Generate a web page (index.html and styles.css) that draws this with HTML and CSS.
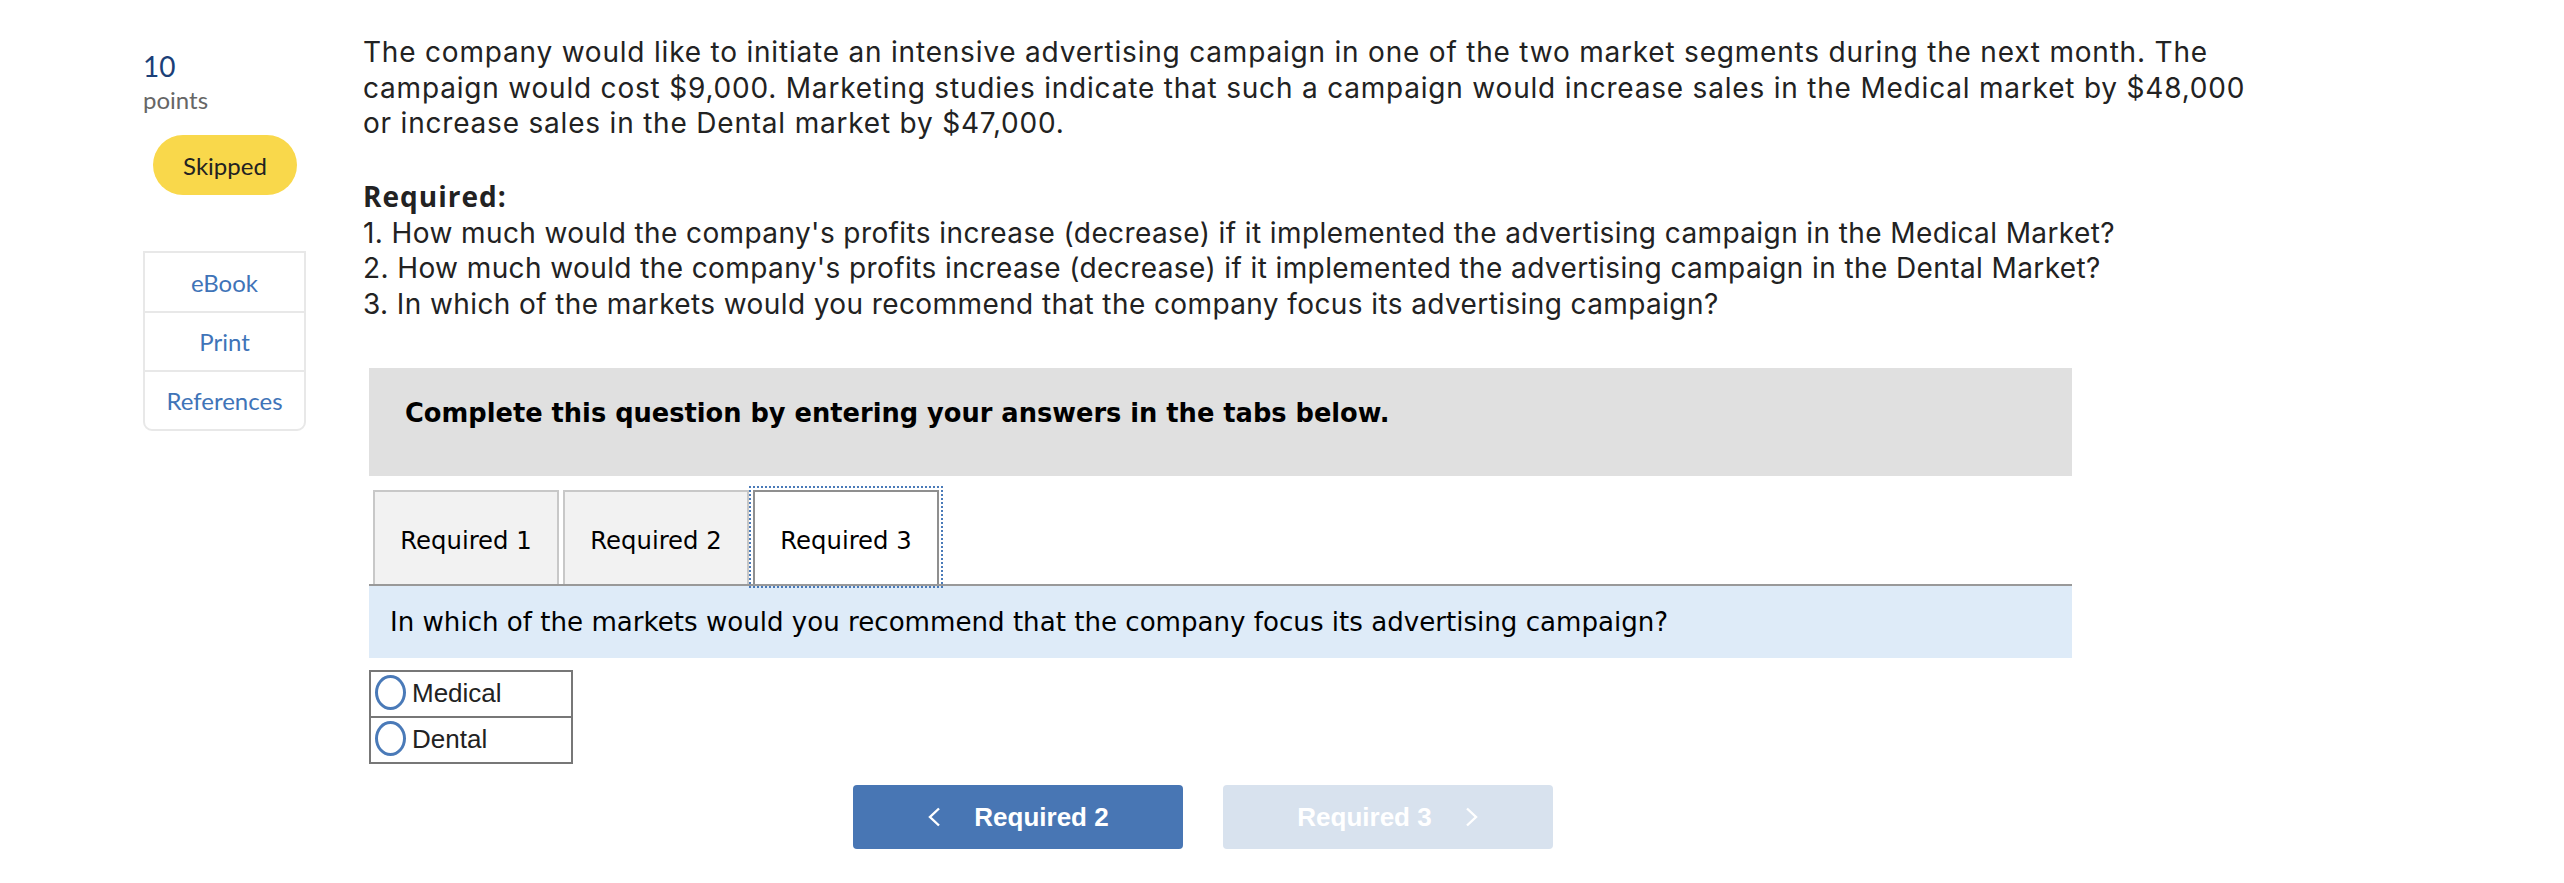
FILE: index.html
```html
<!DOCTYPE html>
<html lang="en">
<head>
<meta charset="utf-8">
<title>Question</title>
<link rel="stylesheet" href="styles.css">
</head>
<body>
<div class="page">
  <aside class="side">
    <div class="num">10</div>
    <div class="pts">points</div>
    <div class="skipped">Skipped</div>
    <ul class="tools">
      <li>eBook</li>
      <li>Print</li>
      <li>References</li>
    </ul>
  </aside>
  <main class="main">
    <p class="intro">The company would like to initiate an intensive advertising campaign in one of the two market segments during the next month. The<br>campaign would cost $9,000. Marketing studies indicate that such a campaign would increase sales in the Medical market by $48,000<br>or increase sales in the Dental market by $47,000.</p>
    <p class="req"><strong>Required:</strong><br>1. How much would the company's profits increase (decrease) if it implemented the advertising campaign in the Medical Market?<br>2. How much would the company's profits increase (decrease) if it implemented the advertising campaign in the Dental Market?<br>3. In which of the markets would you recommend that the company focus its advertising campaign?</p>
    <section class="work">
      <div class="instr">Complete this question by entering your answers in the tabs below.</div>
      <div class="tabs">
        <div class="tab">Required 1</div>
        <div class="tab">Required 2</div>
        <div class="tab active">Required 3</div>
      </div>
      <div class="qbar">In which of the markets would you recommend that the company focus its advertising campaign?</div>
      <table class="choices">
        <tr><td><span class="radio"></span>Medical</td></tr>
        <tr><td><span class="radio"></span>Dental</td></tr>
      </table>
      <div class="nav">
        <button class="btn prev"><svg class="chev" width="14" height="20" viewBox="0 0 14 20"><polyline points="12,1.5 3,10 12,18.5" fill="none" stroke="#fff" stroke-width="2.4"/></svg><span>Required 2</span></button>
        <button class="btn next"><span>Required 3</span><svg class="chev" width="14" height="20" viewBox="0 0 14 20"><polyline points="2,1.5 11,10 2,18.5" fill="none" stroke="#fff" stroke-width="2.4"/></svg></button>
      </div>
    </section>
  </main>
</div>
</body>
</html>
```
FILE: styles.css
```css
html, body {
  margin: 0;
  padding: 0;
  background: #fff;
}
.page {
  display: flex;
  align-items: flex-start;
  padding-left: 143px;
  font-family: Lato, "Liberation Sans", sans-serif;
  color: #222;
}
.side {
  width: 163px;
  flex: none;
  padding-top: 49px;
}
.num {
  font-size: 28px;
  line-height: 34px;
  color: #1b3f78;
}
.pts {
  font-size: 24px;
  line-height: 30px;
  margin-top: 2px;
  color: #666;
}
.skipped {
  margin: 20px 0 0 10px;
  width: 144px;
  height: 60px;
  border-radius: 30px;
  background: #f9d84b;
  font-size: 24px;
  display: flex;
  align-items: center;
  justify-content: center;
  color: #222;
}
.tools {
  list-style: none;
  margin: 56px 0 0 0;
  padding: 0;
  border: 2px solid #e8e8e8;
  border-radius: 0 0 9px 9px;
}
.tools li {
  height: 57px;
  display: flex;
  align-items: center;
  justify-content: center;
  font-size: 24px;
  color: #3f74b8;
  border-top: 2px solid #e8e8e8;
}
.tools li:first-child {
  border-top: 0;
  height: 58px;
}
.main {
  margin-left: 57px;
  width: 1960px;
  flex: none;
  padding-top: 35px;
}
.intro, .req {
  margin: 0;
  font-family: Inter, Lato, sans-serif;
  font-size: 28px;
  line-height: 35.5px;
  letter-spacing: 0.8px;
  white-space: nowrap;
  color: #222;
}
.intro {
  margin-bottom: 37.5px;
}
.req {
  letter-spacing: 0.4px;
}
.req strong {
  font-family: "Open Sans", Inter, sans-serif;
  font-weight: 700;
  letter-spacing: 1px;
}
.work {
  margin: 46px 0 0 6px;
  width: 1703px;
  font-family: "DejaVu Sans", Verdana, sans-serif;
}
.instr {
  height: 108px;
  box-sizing: border-box;
  background: #e0e0e0;
  padding: 30px 0 0 36px;
  font-size: 25.7px;
  line-height: 30px;
  font-weight: 700;
  color: #000;
}
.tabs {
  display: flex;
  gap: 4px;
  margin-top: 14px;
  padding-left: 4px;
  border-bottom: 2px solid #999;
}
.tab {
  width: 186px;
  height: 94px;
  box-sizing: border-box;
  border: 2px solid #c8c8c8;
  border-bottom: 0;
  background: #f2f2f2;
  display: flex;
  align-items: center;
  justify-content: center;
  padding-top: 4px;
  font-size: 24.3px;
  color: #000;
}
.tab.active {
  background: #fff;
  border-color: #8f8f8f;
  outline: 2px dotted #4a7ab8;
  outline-offset: 2px;
}
.qbar {
  height: 72px;
  box-sizing: border-box;
  background: #deebf8;
  display: flex;
  align-items: center;
  padding: 0 0 0 21px;
  font-size: 26.1px;
  color: #000;
}
.choices {
  margin-top: 12px;
  border-collapse: collapse;
  font-family: "Liberation Sans", Arial, sans-serif;
}
.choices td {
  width: 202px;
  height: 46px;
  box-sizing: border-box;
  border: 2px solid #777;
  padding: 0 0 0 4px;
  font-size: 26px;
  color: #222;
  vertical-align: middle;
}
.radio {
  display: inline-block;
  width: 31px;
  height: 35px;
  box-sizing: border-box;
  border: 3.5px solid #4a7ab8;
  border-radius: 50%;
  vertical-align: middle;
  margin: -4px 6px 0 0;
}
.nav {
  display: flex;
  gap: 40px;
  margin: 21px 0 0 484px;
}
.btn {
  width: 330px;
  height: 64px;
  border: 0;
  border-radius: 4px;
  display: flex;
  align-items: center;
  justify-content: center;
  gap: 33px;
  font-family: "Liberation Sans", Arial, sans-serif;
  font-weight: 700;
  font-size: 26px;
  color: #fff;
  padding: 0;
}
.btn.prev {
  background: #4876b4;
}
.btn.next {
  background: #d8e2ee;
}
.chev {
  display: block;
}
```
